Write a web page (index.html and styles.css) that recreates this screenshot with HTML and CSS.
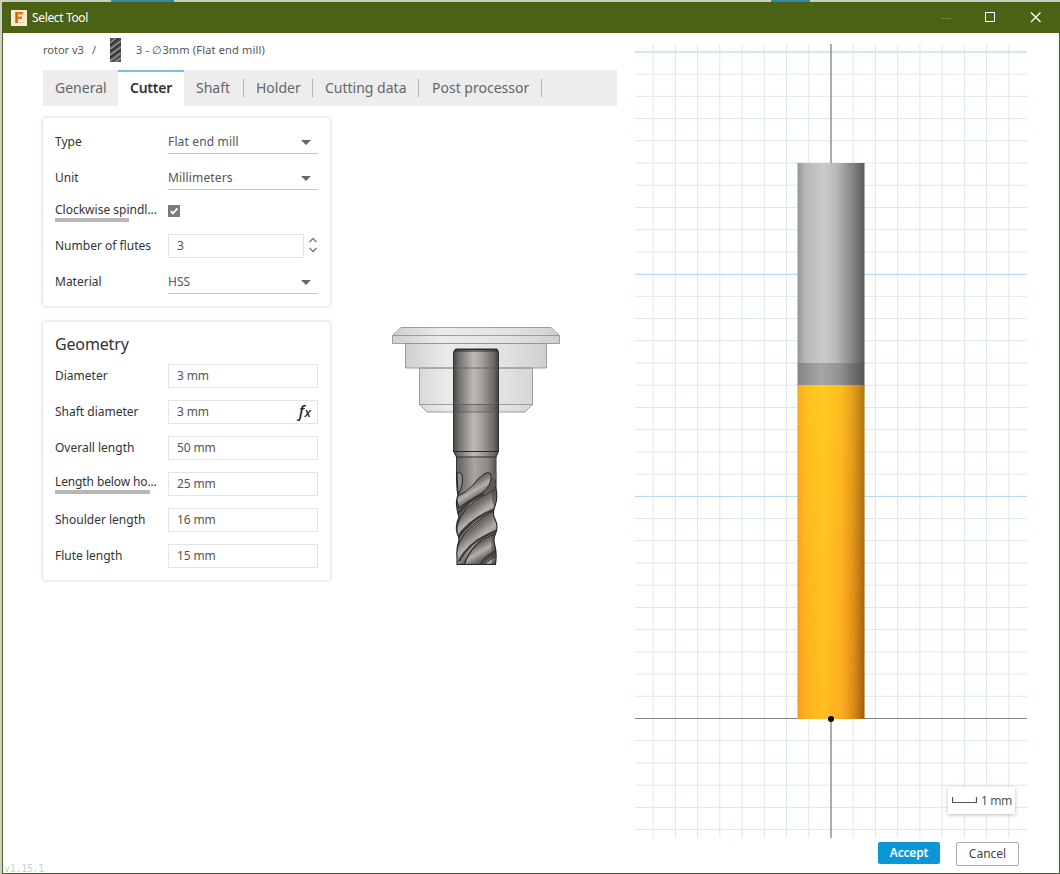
FILE: index.html
```html
<!DOCTYPE html>
<html lang="en">
<head>
<meta charset="utf-8">
<title>Select Tool</title>
<link rel="stylesheet" href="styles.css">
</head>
<body>
<div class="backdrop"><i class="strip strip-a"></i><i class="strip strip-b"></i></div>
<div class="window">
  <header class="titlebar">
    <svg class="app-icon" width="16" height="16" viewBox="0 0 16 16"><rect width="16" height="16" fill="#fbe9d0"/><path d="M4.500 2h7.500v2.500H7v2h4V9H7v4H4.500z" fill="#e8791c"/><path d="M4.500 2h1.500v11H4.500z" fill="#c2601c"/><path d="M8 12.500h5" stroke="#e8c9a5"/></svg>
    <span class="title">Select Tool</span>
    <svg class="controls" width="104" height="14" viewBox="0 0 104 14" fill="none"><path d="M1 7.500h10" stroke="#6f8040"/><rect x="45.500" y="1.500" width="9" height="9" stroke="#fff"/><path d="M91 1.500l9.500 9.500M100.500 1.500l-9.500 9.500" stroke="#fff" stroke-width="1.300"/></svg>
  </header>
  <div class="content">
    <main class="editor">
      <nav class="crumbs">
        <span class="crumb-root">rotor v3</span><span class="slash">/</span>
        <svg class="mill-icon" width="11" height="24" viewBox="0 0 11 24"><rect width="11" height="24" fill="#4c4c4c"/><path d="M0 5L6 0M0 11L11 3M0 17L11 9M0 23L11 15M5 24l6-4" stroke="#8d8d8d" stroke-width="1.600"/><path d="M0 7.500L9 0M0 13.500L11 5.500M0 19.500L11 11.500" stroke="#242424"/></svg>
        <span class="crumb-tool">3 - ∅3mm (Flat end mill)</span>
      </nav>
      <div class="tabs">
        <span class="tab">General</span><span class="tab active">Cutter</span><span class="tab sep">Shaft</span><span class="tab sep">Holder</span><span class="tab sep">Cutting data</span><span class="tab sep t-post">Post processor</span>
      </div>
      <div class="columns">
        <div class="cards">
          <section class="card">
            <div class="row"><label>Type</label><div class="select wide"><span>Flat end mill</span><i class="caret"></i></div></div>
            <div class="row"><label>Unit</label><div class="select wide"><span>Millimeters</span><i class="caret"></i></div></div>
            <div class="row short"><label class="clipped">Clockwise spindl...</label><svg class="check" width="12" height="12" viewBox="0 0 12 12"><rect width="12" height="12" fill="#7a7a7a"/><path d="M2.700 6.200l2.200 2.200 4.500-5" fill="none" stroke="#fff" stroke-width="1.900"/></svg></div>
            <div class="row"><label>Number of flutes</label><div class="input narrow">3</div><svg class="spinner" width="10" height="18" viewBox="0 0 10 18" fill="none" stroke="#777" stroke-width="1.300"><path d="M1.500 6L5 2.500 8.500 6M1.500 12L5 15.500 8.500 12"/></svg></div>
            <div class="row"><label>Material</label><div class="select"><span>HSS</span><i class="caret"></i></div></div>
          </section>
          <section class="card">
            <h2>Geometry</h2>
            <div class="row"><label>Diameter</label><div class="input">3 mm</div></div>
            <div class="row"><label>Shaft diameter</label><div class="input">3 mm<span class="fx">f<small>x</small></span></div></div>
            <div class="row"><label>Overall length</label><div class="input">50 mm</div></div>
            <div class="row"><label class="clipped below">Length below ho...</label><div class="input">25 mm</div></div>
            <div class="row"><label>Shoulder length</label><div class="input">16 mm</div></div>
            <div class="row"><label>Flute length</label><div class="input">15 mm</div></div>
          </section>
        </div>
        <svg class="mill" width="180" height="250" viewBox="385 320 180 250">
          <defs>
            <linearGradient id="steel"><stop offset="0" stop-color="#4c4a48"/><stop offset=".14" stop-color="#787572"/><stop offset=".45" stop-color="#bfbab6"/><stop offset=".65" stop-color="#a09b97"/><stop offset=".9" stop-color="#6b6865"/><stop offset="1" stop-color="#403e3c"/></linearGradient>
            <linearGradient id="neck"><stop offset="0" stop-color="#605d5b"/><stop offset=".45" stop-color="#aaa5a2"/><stop offset=".8" stop-color="#8b8784"/><stop offset="1" stop-color="#5c5957"/></linearGradient>
            <linearGradient id="glass"><stop offset="0" stop-color="#d0d0d0"/><stop offset=".3" stop-color="#ebebeb"/><stop offset=".7" stop-color="#e2e2e2"/><stop offset="1" stop-color="#d0d0d0"/></linearGradient>
            <linearGradient id="land" x1=".2" y1="0" x2=".8" y2="1"><stop offset="0" stop-color="#444140"/><stop offset=".35" stop-color="#6e6a67"/><stop offset=".52" stop-color="#b5b0ab"/><stop offset=".68" stop-color="#6e6a67"/><stop offset="1" stop-color="#3a3736"/></linearGradient>
            <clipPath id="body"><path d="M456.500 472H496V488Q498 498 495 506Q492 514 495 519Q499 527 495 535Q493 540 495 546Q497 554 495.500 564.500H457V557Q456 550 459 540Q459 537 457 533Q455 525 459 517Q457 511 456.500 505Q456 500 458 495Q456.500 490 456.500 472z"/></clipPath>
          </defs>
          <g stroke="#8a8a8a" stroke-width=".8" fill="url(#glass)">
            <path d="M401 327.500H551L559.500 335.500V343.500H392.500V335.500z"/><path d="M393 335.500H559"/>
            <path d="M405.500 343.500H546.500V368H405.500zM419.500 368H532.500V404.500L525 412H427L419.500 404.500z"/><path d="M419.500 404.500H532.500"/>
          </g>
          <path d="M453.500 352L455.500 349H497L498.500 352V451.500L496 457V472H456.500V457L453.500 451.500z" fill="url(#steel)"/>
          <path d="M456.500 472V457L453.500 451.500V352L455.500 349H497L498.500 352V451.500L496 457V472" fill="none" stroke="#333"/>
          <path d="M457 458h38.500v15H457z" fill="url(#neck)"/>
          <path d="M455 349.500H497M454 351H498M453.500 451.500H498.500M456 457H496.500" stroke="#292827" stroke-width="1.200" fill="none"/>
          <path d="M454 368H498M454 404.500H498M454 412H498" stroke="#5c5957" stroke-width=".8"/>
          <path d="M454 404.500h44v7h-44z" fill="#444" opacity=".15"/>
          <g clip-path="url(#body)">
            <rect x="457" y="471" width="38.500" height="95" fill="url(#neck)"/>
            <path d="M498 487L483 495 470 503 459 520V500L457 497 470 499 482 492 490 477 498 480zM455 500H462L457 516zM496 508L483 515 473 523 458 539V528L476 506 498 496z" fill="#5e5a57"/>
            <g fill="url(#land)" stroke="#242322" stroke-width=".9">
              <path d="M484 474Q488 471 491 474Q492 486 482 493Q466 502 459 508L456 497Q466 493 473 485Q478 478 484 474z"/>
              <path d="M457 526Q463 506 483 496Q490 492 499 488V507Q491 510 483 515Q466 526 457 540z"/>
              <path d="M456 553Q460 532 483 517Q490 512 499 509V531Q489 533 483 538Q470 548 463 566H456z"/>
              <path d="M463 568Q470 547 484 539Q490 535 499 533V552Q490 554 481 568z"/>
              <path d="M483 568Q487 560 499 554V568z"/>
            </g>
            <path d="M456 516Q468 500 484 494M456 540Q466 523 486 513L498 508M459 561Q469 543 487 535L498 530M479 566Q485 556 498 550" fill="none" stroke="#3c3937" stroke-width="2"/>
            <path d="M492 488L498 485V511Q493 507 492 500zM491 536L498 533V566H492z" fill="#45423f" opacity=".55"/>
          </g>
          <path d="M457 474Q460 470 462 475Q464 485 458 494z" fill="#8f8b88" stroke="#272625"/>
          <path class="mill-edge" d="M496 472V488Q498 498 495 506Q492 514 495 519Q499 527 495 535Q493 540 495 546Q497 554 495.500 564.500H457V557Q456 550 459 540Q459 537 457 533Q455 525 459 517Q457 511 456.500 505Q456 500 458 495Q456.500 490 456.500 472"/>
        </svg>
      </div>
    </main>
    <aside class="preview">
      <div class="viewport">
        <svg width="392" height="794" viewBox="0 0 392 794">
          <defs>
            <pattern id="minor" x="195.500" y="674" width="22.230" height="22.220" patternUnits="userSpaceOnUse"><path d="M.5 0V22.230M0 .5H22.230" stroke="#dae7ed" fill="none"/></pattern>
            <linearGradient id="shank"><stop offset="0" stop-color="#969696"/><stop offset=".12" stop-color="#b8b8b8"/><stop offset=".4" stop-color="#cbcbcb"/><stop offset=".58" stop-color="#b8b8b8"/><stop offset=".82" stop-color="#858585"/><stop offset="1" stop-color="#595959"/></linearGradient>
            <linearGradient id="collar"><stop offset="0" stop-color="#858585"/><stop offset=".35" stop-color="#a6a6a6"/><stop offset=".6" stop-color="#959595"/><stop offset="1" stop-color="#555"/></linearGradient>
            <linearGradient id="cut"><stop offset="0" stop-color="#f49b1b"/><stop offset=".12" stop-color="#ffb51e"/><stop offset=".4" stop-color="#ffc522"/><stop offset=".65" stop-color="#ffb020"/><stop offset=".83" stop-color="#dc8918"/><stop offset="1" stop-color="#8f550c"/></linearGradient>
            <linearGradient id="warm" x2="0" y2="1"><stop offset="0" stop-color="#ffe020" stop-opacity=".25"/><stop offset="1" stop-color="#ff9c20" stop-opacity=".15"/></linearGradient>
          </defs>
          <rect width="392" height="794" fill="url(#minor)"/>
          <path d="M0 8H392M0 230.500H392M0 452.500H392" stroke="#b9dde8" stroke-width="1.200"/>
          <path d="M196 0V794" stroke="#858585" stroke-width="1.300"/><path d="M0 674.500H392" stroke="#858585"/>
          <rect x="162.500" y="119" width="67" height="201" fill="url(#shank)"/>
          <rect x="162.500" y="319" width="67" height="23" fill="url(#collar)"/>
          <rect x="162.500" y="341" width="67" height="334" fill="url(#cut)"/>
          <rect x="162.500" y="341" width="67" height="334" fill="url(#warm)"/>
          <circle cx="196" cy="675" r="3" fill="#000"/>
        </svg>
        <div class="scale"><svg width="25" height="9" viewBox="0 0 25 9"><path d="M.5 1V6.500H24.500V1" fill="none" stroke="#555" stroke-width="1.200"/></svg><span>1 mm</span></div>
      </div>
      <div class="actions"><button class="accept">Accept</button><button class="cancel">Cancel</button></div>
    </aside>
  </div>
  <span class="version">v1.15.1</span>
</div>
</body>
</html>
```

FILE: styles.css
```css
* { box-sizing: border-box; }
body { margin: 0; width: 1060px; height: 874px; overflow: hidden; position: relative; padding: 2px 0 0 2px; background: #c8d0c4; font: 12px/16px "Noto Sans", sans-serif; color: #333; }
.backdrop { position: absolute; top: 0; left: 0; width: 1060px; height: 2px; }
.strip { position: absolute; top: 0; height: 2px; background: #3187a8; }
.strip-a { left: 111px; width: 63px; }
.strip-b { left: 771px; width: 39px; }
.window { position: relative; width: 1058px; height: 872px; background: #fff; border: 1px solid #4b5f20; border-top: 0; }
.titlebar { display: flex; align-items: center; height: 31px; padding: 0 16px 0 9px; margin: 0 -1px; background: #4b6114; color: #fff; }
.title { margin-left: 5px; font-size: 12px; letter-spacing: -.35px; }
.controls { margin-left: auto; }
.content { display: flex; }
.editor { width: 574px; margin-left: 40px; }
.crumbs { display: flex; align-items: center; height: 37px; padding-bottom: 4px; font-size: 11px; color: #555; }
.crumb-root { width: 49px; white-space: nowrap; }
.slash { width: 18px; }
.mill-icon { margin-right: 15px; }
.crumb-tool { letter-spacing: .17px; }
.tabs { display: grid; grid-template-columns: 75px 66px 60px 69px 106px 123px; height: 36px; background: #ededed; }
.tab { position: relative; padding: 0 0 0 12px; line-height: 36px; font-size: 14px; color: #666; white-space: nowrap; }
.active { background: #fff; color: #333; font-weight: 600; letter-spacing: -.25px; border-top: 2px solid #7dbdcf; line-height: 32px; }
.sep::after { content: ""; position: absolute; right: 0; top: 9px; width: 1px; height: 18px; background: #b4b4b4; }
.t-post { padding-left: 13px; }
.columns { display: flex; padding-top: 12px; }
.cards { display: flex; flex-direction: column; gap: 16px; width: 287px; }
.card { padding: 6px 12px; background: #fff; border-radius: 2px; box-shadow: 0 0 3px 1px #dedede; }
.row { display: flex; align-items: center; height: 36px; }
.row.short { height: 32px; }
label { width: 113px; flex: none; white-space: nowrap; color: #333; }
.clipped { position: relative; top: -2px; }
.clipped::after { content: ""; position: absolute; left: 0; top: 16px; height: 4px; width: 74px; background: #b8b8b8; }
.below { letter-spacing: -.12px; }
.below::after { width: 95px; }
.check { margin-top: -2px; }
.select { display: flex; align-items: center; justify-content: space-between; width: 150px; height: 24px; padding-right: 7px; border-bottom: 1px solid #c4c4c4; color: #555; }
.wide { letter-spacing: .15px; }
.caret { margin-top: 1px; border: 5px solid transparent; border-top-color: #666; border-bottom: 0; }
.input { position: relative; width: 150px; height: 24px; padding-left: 8px; border: 1px solid #e4e4e4; line-height: 22px; letter-spacing: -.15px; color: #555; }
.narrow { width: 136px; }
.spinner { margin-left: 4px; margin-top: -3px; }
.fx { position: absolute; right: 6px; top: -1px; font: italic 500 16px/22px "Noto Sans", sans-serif; letter-spacing: .5px; color: #222; }
.fx small { font-size: 13px; letter-spacing: 0; }
h2 { margin: 0; height: 30px; padding-top: 2px; font-size: 16px; line-height: 28px; font-weight: 400; letter-spacing: -.15px; color: #333; }
.mill { margin: 202px 0 0 55px; }
.mill-edge { fill: none; stroke: #272625; stroke-width: 1.100px; }
.preview { width: 392px; margin-left: 18px; padding-top: 11px; }
.viewport { position: relative; height: 794px; }
.viewport svg { display: block; }
.scale { position: absolute; right: 12px; top: 743px; display: flex; align-items: center; gap: 4px; width: 67px; height: 27px; padding-left: 4px; background: #fff; box-shadow: 0 1px 4px #bbb; white-space: nowrap; letter-spacing: -.4px; color: #555; }
.actions { display: flex; justify-content: flex-end; gap: 16px; padding: 4px 8px 0 0; }
button { font: 12px/20px "Noto Sans", sans-serif; padding: 0; border-radius: 2px; }
.accept { width: 62px; height: 22px; border: 0; background: #0b96d8; color: #fff; font-weight: 600; letter-spacing: -.2px; }
.cancel { width: 63px; height: 24px; border: 1px solid #aaa; background: #fff; color: #444; }
.version { position: absolute; left: 1px; bottom: -4px; font: 10px/16px "DejaVu Sans Mono", monospace; letter-spacing: -.3px; color: #d0d0d0; }
```
